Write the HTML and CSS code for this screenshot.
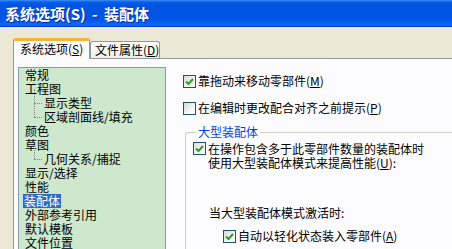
FILE: index.html
```html
<!DOCTYPE html>
<html lang="zh-CN">
<head>
    <meta charset="UTF-8">
    <title>系统选项(S) - 装配体</title>
    <link rel="stylesheet" href="styles.css">
</head>
<body>
    <div class="window">
        <div class="titlebar">系统选项(S) - 装配体</div>
        <div class="dialog">
            <div class="tabs">
                <div class="tab active">系统选项(<u>S</u>)</div>
                <div class="tab">文件属性(<u>D</u>)</div>
            </div>
            <div class="panel">
                <ul class="tree">
                    <li>常规</li>
                    <li>工程图</li>
                    <li class="child">显示类型</li>
                    <li class="child last">区域剖面线/填充</li>
                    <li>颜色</li>
                    <li>草图</li>
                    <li class="child last">几何关系/捕捉</li>
                    <li>显示/选择</li>
                    <li>性能</li>
                    <li><span class="selected">装配体</span></li>
                    <li>外部参考引用</li>
                    <li>默认模板</li>
                    <li>文件位置</li>
                </ul>
                <div class="options">
                    <div class="option first">
                        <span class="check on"><svg viewBox="0 0 11 11"><path d="M2 5.5 L4.5 8 L9 3" /></svg></span>
                        <span>靠拖动来移动零部件(<u>M</u>)</span>
                    </div>
                    <div class="option">
                        <span class="check"></span>
                        <span>在编辑时更改配合对齐之前提示(<u>P</u>)</span>
                    </div>
                    <fieldset class="group">
                        <legend>大型装配体</legend>
                        <div class="option top">
                            <span class="check on"><svg viewBox="0 0 11 11"><path d="M2 5.5 L4.5 8 L9 3" /></svg></span>
                            <span>在操作包含多于此零部件数量的装配体时<br>使用大型装配体模式来提高性能(<u>U</u>):</span>
                        </div>
                        <div class="label">当大型装配体模式激活时:</div>
                        <div class="option nested">
                            <span class="check on"><svg viewBox="0 0 11 11"><path d="M2 5.5 L4.5 8 L9 3" /></svg></span>
                            <span>自动以轻化状态装入零部件(<u>A</u>)</span>
                        </div>
                    </fieldset>
                </div>
            </div>
        </div>
    </div>
</body>
</html>
```

FILE: styles.css
```css
html, body {
    margin: 0;
    padding: 0;
}
body {
    width: 452px;
    height: 249px;
    overflow: hidden;
    font-family: "Noto Sans CJK SC", "DejaVu Sans", sans-serif;
    font-size: 12px;
    line-height: 14px;
    color: #000;
}
.window {
    display: flex;
    flex-direction: column;
    height: 249px;
}
.titlebar {
    height: 27px;
    box-sizing: border-box;
    padding-left: 5px;
    display: flex;
    align-items: center;
    color: #fff;
    font-size: 15px;
    font-weight: bold;
    word-spacing: 3px;
    text-shadow: 1px 1px 0 #0a2a9a;
    background: linear-gradient(to bottom, #3d8ef5 0, #0a5fe8 2px, #0054e3 5px, #0054e3 19px, #0862f5 23px, #0c68ff 25px, #003cb0 27px);
}
.dialog {
    flex: 1;
    display: flex;
    flex-direction: column;
    background-color: #ebe8d6;
    padding: 11px 0 0 13px;
    min-height: 0;
}
.tabs {
    display: flex;
    align-items: flex-end;
    height: 20px;
}
.tab {
    box-sizing: border-box;
    height: 17px;
    width: 70px;
    padding-left: 4px;
    line-height: 15px;
    border: 1px solid #919b9c;
    border-bottom: none;
    border-radius: 3px 3px 0 0;
    background: linear-gradient(to bottom, #fff, #f0efea);
    white-space: nowrap;
}
.tab.active {
    height: 21px;
    width: 77px;
    margin-bottom: -1px;
    padding-left: 6px;
    line-height: 16px;
    background: #fcfcfe;
    border-top: 3px solid #f6b338;
    position: relative;
    z-index: 1;
}
.tab u, .option u {
    text-decoration: underline;
}
.panel {
    flex: 1;
    display: flex;
    align-items: flex-start;
    background-color: #fcfcfe;
    border-top: 1px solid #919b9c;
    border-left: 1px solid #919b9c;
    padding: 8px 0 0 4px;
    min-height: 0;
}
.tree {
    list-style: none;
    margin: 0;
    padding: 0 0 0 6px;
    width: 140px;
    flex-shrink: 0;
    height: 200px;
    background-color: #cde8cd;
    border: 1px solid #8a9aa8;
}
.tree li {
    height: 14px;
    white-space: nowrap;
}
.tree li.child {
    padding-left: 19px;
    position: relative;
}
.tree li.child::before {
    content: "";
    position: absolute;
    left: 9px;
    top: -7px;
    height: 14px;
    border-left: 1px dotted #7f8a7f;
}
.tree li.child::after {
    content: "";
    position: absolute;
    left: 9px;
    top: 7px;
    width: 8px;
    border-top: 1px dotted #7f8a7f;
}
.selected {
    display: inline-block;
    margin-left: -2px;
    padding: 0 1px;
    background-color: #316ac5;
    color: #fff;
    outline: 1px dotted #c8d7f0;
}
.options {
    flex: 1;
    margin-left: 17px;
    padding-top: 7px;
    min-width: 0;
}
.option {
    display: flex;
    align-items: center;
    gap: 2px;
    height: 14px;
    white-space: nowrap;
}
.option.first {
    margin-bottom: 13px;
}
.option.top {
    align-items: flex-start;
    height: auto;
    margin-top: 3px;
}
.check {
    box-sizing: border-box;
    width: 13px;
    height: 13px;
    flex-shrink: 0;
    border: 1px solid #1c5180;
    background: linear-gradient(135deg, #dcdcd4 0, #f6f6f2 60%, #fff 100%);
    display: flex;
}
.check svg {
    width: 11px;
    height: 11px;
}
.check path {
    fill: none;
    stroke: #21a121;
    stroke-width: 2;
}
.group {
    margin: 10px 0 0 2px;
    padding: 0 0 0 7px;
    border: 1px solid #d0d0bf;
    border-right: none;
    border-bottom: none;
    border-radius: 3px 0 0 0;
    height: 140px;
}
.group legend {
    color: #0046d5;
    padding: 0 2px;
    margin-left: 3px;
}
.label {
    margin: 36px 0 0 16px;
    height: 14px;
    white-space: nowrap;
}
.option.nested {
    margin: 9px 0 0 30px;
}
```
